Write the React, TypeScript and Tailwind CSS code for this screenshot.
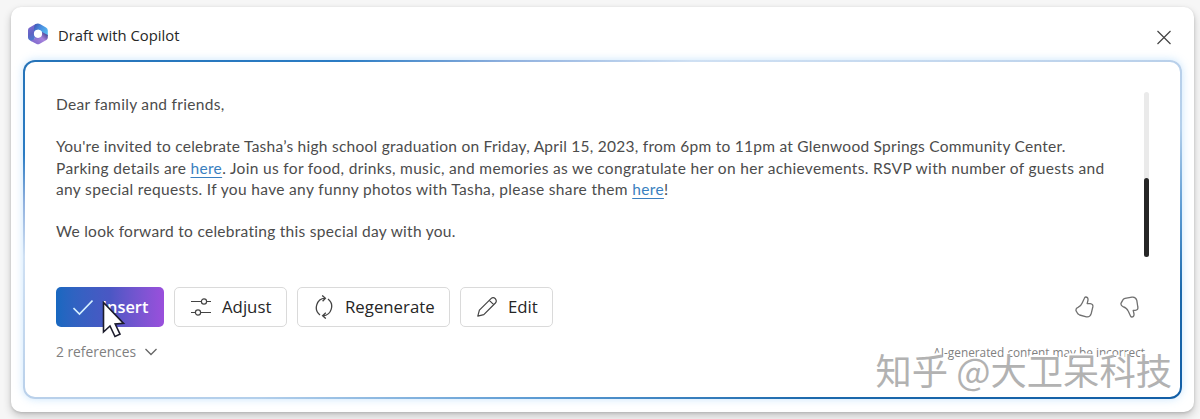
import React from "react";

const letterLines = [
  { id: "greeting", tracking: "tracking-[0.31px]", parts: ["Dear family and friends,"] },
  { id: "gap-1", tracking: "", parts: [] },
  {
    id: "invite",
    tracking: "tracking-[0.255px]",
    parts: [
      "You're invited to celebrate Tasha’s high school graduation on Friday, April 15, 2023, from 6pm to 11pm at Glenwood Springs Community Center.",
    ],
  },
  {
    id: "parking",
    tracking: "tracking-[0.325px]",
    parts: [
      "Parking details are ",
      "here",
      ". Join us for food, drinks, music, and memories as we congratulate her on her achievements. RSVP with number of guests and",
    ],
  },
  {
    id: "requests",
    tracking: "tracking-[0.34px]",
    parts: ["any special requests. If you have any funny photos with Tasha, please share them ", "here", "!"],
  },
  { id: "gap-2", tracking: "", parts: [] },
  { id: "closing", tracking: "tracking-[0.28px]", parts: ["We look forward to celebrating this special day with you."] },
];

function CopilotLogo() {
  return (
    <svg className="h-[22px] w-[22px]" viewBox="0 0 22 22">
      <defs>
        <linearGradient id="logoTop" x1="0" y1="0" x2="1" y2="0.6">
          <stop offset="0" stopColor="#3d4fae" />
          <stop offset="0.5" stopColor="#4a8fe0" />
          <stop offset="1" stopColor="#55b8f0" />
        </linearGradient>
        <linearGradient id="logoLeft" x1="0" y1="0" x2="0.3" y2="1">
          <stop offset="0" stopColor="#8a6cd4" />
          <stop offset="0.6" stopColor="#5f63c4" />
          <stop offset="1" stopColor="#4a7cd0" />
        </linearGradient>
        <linearGradient id="logoBottom" x1="0" y1="0.8" x2="1" y2="0">
          <stop offset="0" stopColor="#7a66cc" />
          <stop offset="0.55" stopColor="#a884dc" />
          <stop offset="1" stopColor="#2b2f7c" />
        </linearGradient>
      </defs>
      <path d="M8.6 1 L2.6 4.4 Q1 5.3 1 7 V14.6 Q1 16.2 2.4 17 L4.4 18.2 Q8 18 8 13.5 V8.5 L12.5 5 Z" fill="url(#logoLeft)" />
      <path d="M8.6 1 Q11 -0.2 13.4 1.2 L19 4.4 Q20.8 5.4 20.8 7.4 V13 L14.5 14 V8.5 L11 6.5 L7 8.6 V5 Q7 2 8.6 1 Z" fill="url(#logoTop)" />
      <path d="M3 17.4 Q5.5 17.8 8 15.6 L14 12.4 L15 9 L20.8 12 V14.4 Q20.8 16 19.4 16.9 L12.8 20.8 Q11 21.8 9.2 20.8 Z" fill="url(#logoBottom)" />
      <path d="M8 13.5 L14.5 12 L12 16 L8 16.5 Z" fill="#8f76d4" />
      <circle cx="11" cy="10.8" r="4.1" fill="#fff" />
    </svg>
  );
}

function ToolButton({ width, label, children }: { width: string; label: string; children: React.ReactNode }) {
  return (
    <button
      className={`${width} flex h-10 items-center gap-[11px] rounded-[5px] border-[1.5px] border-[#dadada] bg-white pl-4 text-[16.8px] font-medium text-[#262626]`}
    >
      {children}
      <span className="whitespace-nowrap">{label}</span>
    </button>
  );
}

export default function App() {
  return (
    <div className="h-[419px] w-[1200px] overflow-hidden bg-[#f6f6f6] pl-[11px] pt-[7px] font-['Open_Sans','Noto_Sans',sans-serif]">
      <div className="h-[405px] w-[1183px] rounded-[10px] bg-white px-3 shadow-[0_4px_8px_rgba(0,0,0,0.2),0_1px_3px_rgba(0,0,0,0.14)]">
        {/* Header */}
        <div className="flex h-[53px] items-center justify-between pl-1 pr-[10px]">
          <div className="flex items-center gap-[9px] pt-px">
            <CopilotLogo />
            <span className="whitespace-nowrap pt-[2px] text-[14.8px] text-[#262626]">Draft with Copilot</span>
          </div>
          <svg className="mt-2 h-4 w-4" viewBox="0 0 16 16" fill="none" stroke="#444" strokeWidth="1.2">
            <path d="M1.5 1 L14.5 14 M14.5 1 L1.5 14" />
          </svg>
        </div>

        {/* Draft panel */}
        <div className="h-[339px] w-[1159px] rounded-[12px] bg-[linear-gradient(to_bottom_right,#2573b8_0%,#2b7cc4_14%,#8fb0de_21%,#cfe0f3_29%,#b9d0ea_50%,#b3cfeb_60%,#5c9bd3_72%,#1c69ac_84%,#125ea6_100%)] p-[2px] shadow-[0_0_9px_rgba(120,190,250,0.4)]">
          <div className="relative h-full rounded-[10px] bg-white px-[31px] pt-[30px]">
            <div className="flex h-[167px] justify-between">
              <div className="pt-[2px] font-['Lato',sans-serif] text-[15.5px] leading-[21.2px] text-[#4c4c4c]">
                {letterLines.map((line) => (
                  <p key={line.id} className={`${line.tracking} h-[21.2px] whitespace-nowrap`}>
                    {line.parts.map((part, i) =>
                      part === "here" ? (
                        <a key={i} className="text-[#3a7fc0] underline underline-offset-[3px]">{part}</a>
                      ) : (
                        <span key={i}>{part}</span>
                      )
                    )}
                  </p>
                ))}
              </div>
              <div className="h-[165px] w-[5px] shrink-0 rounded-full bg-[#eaeaea] pt-[86px]">
                <div className="h-[79px] rounded-full bg-[#262626]" />
              </div>
            </div>

            {/* Actions */}
            <div className="mt-[28px] flex h-10 items-center justify-between">
              <div className="flex gap-[10px]">
                <button className="flex h-10 w-[108px] items-center gap-[9px] rounded-[5px] bg-linear-to-r from-[#1768c0] via-[#4a57c4] to-[#9a4fdc] pl-[17px] text-[16.4px] font-semibold text-white">
                  <svg className="h-5 w-5" viewBox="0 0 20 20" fill="none" stroke="#d4f0ff" strokeWidth="1.6">
                    <path d="M0.5 11 L6.5 17 L19.5 3.5" />
                  </svg>
                  <span>Insert</span>
                </button>
                <ToolButton width="w-[113px]" label="Adjust">
                  <svg className="h-5 w-5" viewBox="0 0 20 20" fill="none" stroke="#444" strokeWidth="1.2">
                    <path d="M0 4.5 H10 M16 4.5 H20 M0 15.5 H4 M10 15.5 H20" />
                    <circle cx="13" cy="4.5" r="2.6" />
                    <circle cx="7" cy="15.5" r="2.6" />
                  </svg>
                </ToolButton>
                <ToolButton width="w-[153px]" label="Regenerate">
                  <svg className="h-[24px] w-5" viewBox="0 0 20 24" fill="none" stroke="#444" strokeWidth="1.3">
                    <path d="M6 20 A9.4 9.4 0 0 1 11 3.2 M8.2 0.4 L11.4 3.2 L8.6 6.2" />
                    <path d="M14 4 A9.4 9.4 0 0 1 9 20.8 M11.8 17.8 L8.6 20.8 L11.8 23.6" />
                  </svg>
                </ToolButton>
                <ToolButton width="w-[93px]" label="Edit">
                  <svg className="h-5 w-5" viewBox="0 0 20 20" fill="none" stroke="#444" strokeWidth="1.2" strokeLinejoin="round">
                    <path d="M0.8 19.2 L2.4 13.2 L14 1.6 Q16.2 -0.2 18.4 1.8 Q20.2 4 18.4 6 L6.8 17.6 Z M12.3 3.3 L16.7 7.7" />
                  </svg>
                </ToolButton>
              </div>
              <div className="flex gap-[26px] pr-[10px]">
                <svg className="h-[22px] w-[19px]" viewBox="0 0 19 22" fill="none" stroke="#707070" strokeWidth="1.3" strokeLinejoin="round">
                  <path d="M10.6 1 Q13.2 1 13 4 L12.2 7.6 H15.2 Q18.4 8 17.8 11 L16.2 17.6 Q15 21.4 11.4 20.8 L4.6 19 Q2.8 18.4 2.2 16.8 L1 14.6 Q0.6 12.4 3 11.4 Q6 10 7.2 7 L9.4 2.2 Q9.8 1 10.6 1 Z" />
                </svg>
                <svg className="h-[22px] w-[19px]" viewBox="0 0 19 22" fill="none" stroke="#707070" strokeWidth="1.3" strokeLinejoin="round">
                  <path d="M11.6 21 Q14.2 21 14 18 L13.2 14.4 H15.2 Q18.4 14 17.8 11 L16.8 4.4 Q15.6 0.6 12 1.2 L5 2.4 Q3.4 2.8 2.6 4.4 L1 7.4 Q0.6 9.6 3 10.6 Q7 12 8.2 15 L10.4 19.8 Q10.8 21 11.6 21 Z" />
                </svg>
              </div>
            </div>

            {/* Footer */}
            <div className="mt-[15px] flex items-center justify-between pr-[4px] text-[#808080]">
              <div className="flex items-center gap-[9px] text-[13.8px]">
                <span className="whitespace-nowrap">2 references</span>
                <svg className="h-2 w-3" viewBox="0 0 12 8" fill="none" stroke="#666" strokeWidth="1.3">
                  <path d="M0.5 1 L6 6.5 L11.5 1" />
                </svg>
              </div>
              <span className="whitespace-nowrap text-[11.8px]">AI-generated content may be incorrect</span>
            </div>

            {/* Watermark */}
            <div className="absolute right-[8px] top-[285px] whitespace-nowrap font-['Noto_Sans_CJK_SC',sans-serif] text-[36.3px] leading-[44px] text-[#b2b2b2] [text-shadow:-1px_-1px_0_#fff,-2px_-2px_0_#fff]">
              知乎 @大卫呆科技
            </div>

            {/* Pointer */}
            <svg className="absolute left-[77px] top-[239px] h-[38px] w-[24px]" viewBox="0 0 24 38">
              <path d="M1.5 1.5 V31 L8 25 L13 35.5 L18 33.2 L13.2 23 L21.5 22.4 Z" fill="#fff" stroke="#1c1c2c" strokeWidth="1.6" />
            </svg>
          </div>
        </div>
      </div>
    </div>
  );
}
